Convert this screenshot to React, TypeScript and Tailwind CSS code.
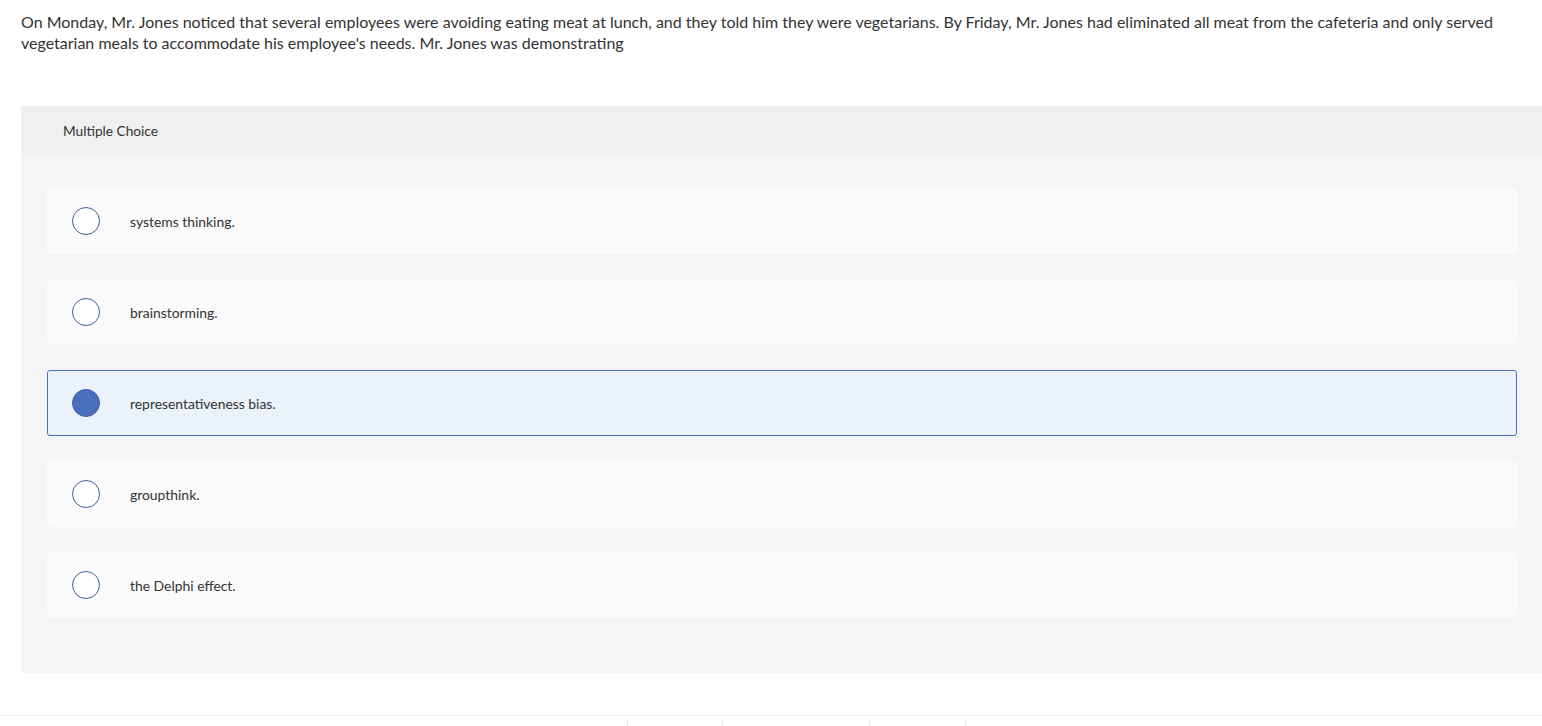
import React, { useState } from "react";

const choices = [
  "systems thinking.",
  "brainstorming.",
  "representativeness bias.",
  "groupthink.",
  "the Delphi effect.",
];

const App = () => {
  const [picked, setPicked] = useState(2);

  return (
    <div className="min-h-screen bg-white text-[#333] font-['Lato',sans-serif]">
      {/* Question */}
      <p className="pl-[21px] pr-[20px] pt-[11px] text-[16px] leading-[21px]">
        On Monday, Mr. Jones noticed that several employees were avoiding eating meat at lunch, and they told him they were
        vegetarians. By Friday, Mr. Jones had eliminated all meat from the cafeteria and only served vegetarian meals to
        accommodate his employee's needs. Mr. Jones was demonstrating
      </p>

      {/* Answer panel */}
      <div className="ml-[21px] mt-[53px] bg-[#f5f5f5]">
        <div className="h-[49px] bg-[#f0f0f0] flex items-center pl-[42px] pt-[2px] text-[13.7px] text-[#333]">
          Multiple Choice
        </div>
        <div className="flex flex-col gap-[25px] pt-[33px] pb-[55px] pl-[26px] pr-[25px]">
          {choices.map((c, i) => {
            const on = picked === i;
            return (
              <button
                key={c}
                type="button"
                onClick={() => setPicked(i)}
                className={`h-[66px] flex items-center rounded-[3px] text-left border ${
                  on ? "bg-[#ebf2fb] border-[#4a70c0]" : "bg-[#fafafa] border-[#fafafa]"
                }`}
              >
                <span
                  className={`ml-[24px] w-[28px] h-[28px] rounded-full border-[1.5px] border-[#3d5f9c] ${
                    on ? "bg-[#4a6fbd]" : "bg-white"
                  }`}
                />
                <span className="ml-[30px] pt-[2px] text-[13.9px] text-[#333]">{c}</span>
              </button>
            );
          })}
        </div>
      </div>

      {/* Footer rule */}
      <div className="mt-[42px] border-t border-[#efefef] h-[11px]">
        <div className="flex h-full">
          <div className="w-[627px]" />
          <div className="w-px mt-[5px] bg-[#e6e6e6]" />
          <div className="w-[94px]" />
          <div className="w-px mt-[5px] bg-[#e6e6e6]" />
          <div className="w-[146px]" />
          <div className="w-px mt-[5px] bg-[#e6e6e6]" />
          <div className="w-[95px]" />
          <div className="w-px mt-[5px] bg-[#e6e6e6]" />
        </div>
      </div>
    </div>
  );
};

export default App;
